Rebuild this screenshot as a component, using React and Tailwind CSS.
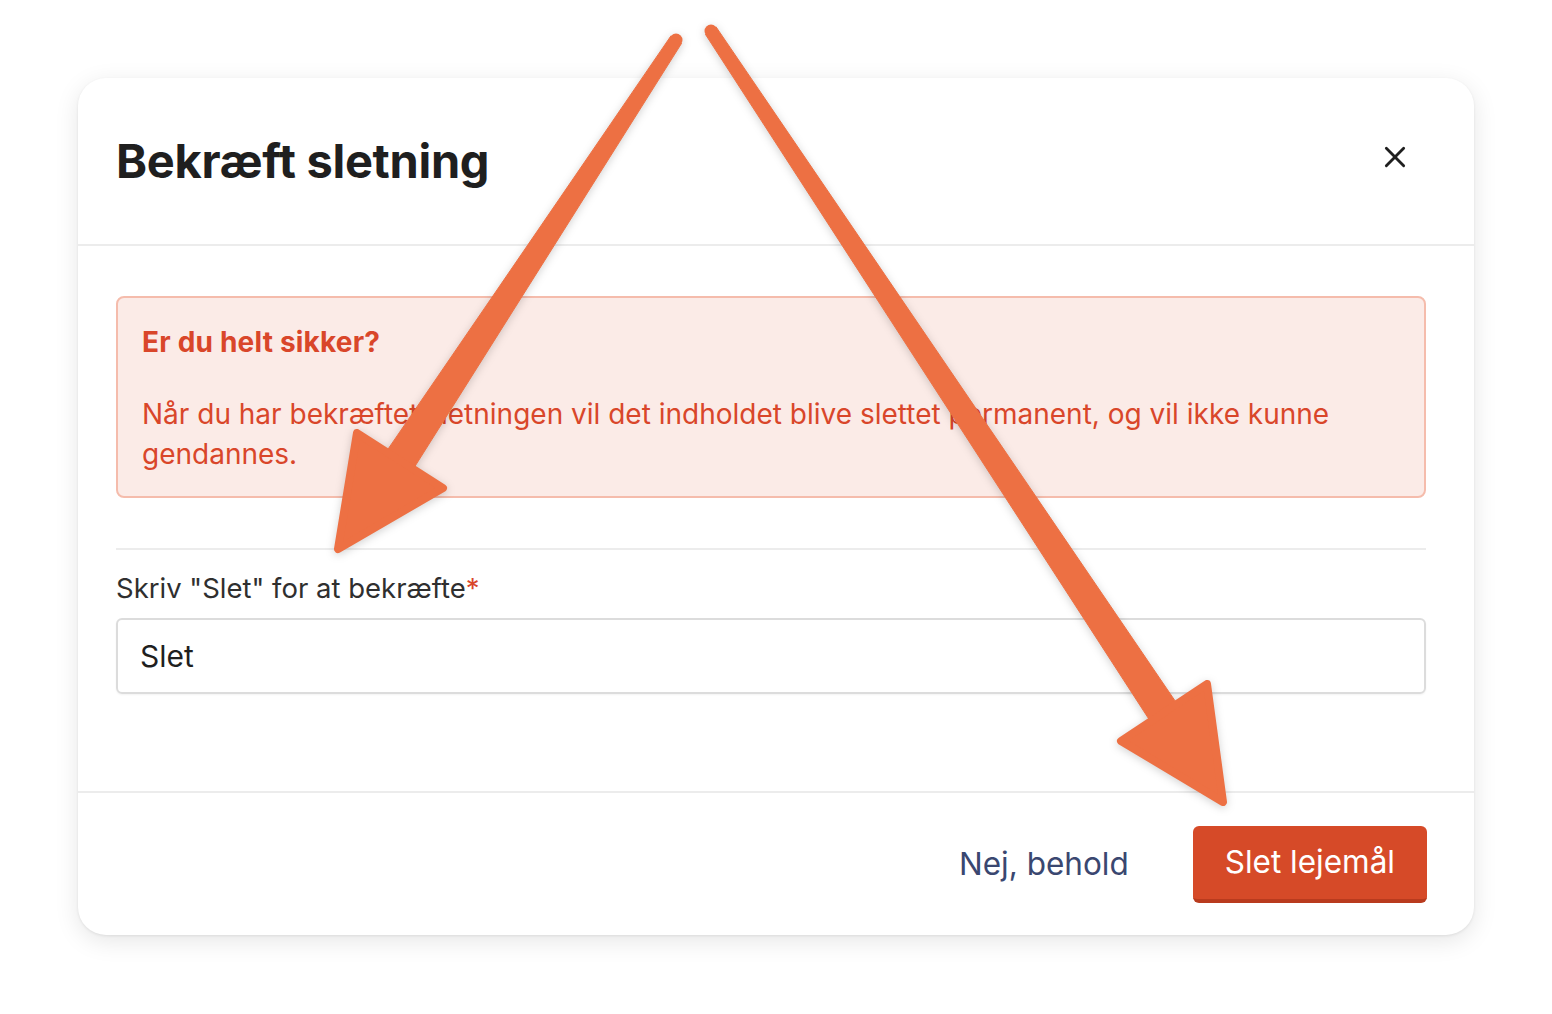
import React from "react";

function Arrows() {
  return (
    <svg
      className="absolute inset-0 pointer-events-none"
      width="1552"
      height="1014"
      viewBox="0 0 1552 1014"
      style={{ filter: "drop-shadow(0 2px 4px rgba(0,0,0,0.18))" }}
    >
      <g fill="#ed7043" stroke="#ed7043" strokeLinejoin="round" strokeLinecap="round">
        {/* left arrow */}
        <circle cx="676" cy="40" r="6.5" stroke="none" />
        <polygon points="681.4,43.6 413.4,468.8 386.6,451.2 670.6,36.4" strokeWidth="1" />
        <polygon points="357,433 443,488 338,549" strokeWidth="8" />
        {/* right arrow */}
        <circle cx="711" cy="31" r="6.5" stroke="none" />
        <polygon points="705.6,34.6 1148.7,718.8 1175.3,701.2 716.4,27.4" strokeWidth="1" />
        <polygon points="1207,684 1121,741 1223,802" strokeWidth="8" />
      </g>
    </svg>
  );
}

export default function App() {
  return (
    <div className="relative w-[1552px] h-[1014px] bg-white font-['Inter',sans-serif] overflow-hidden">
      <div className="pt-[78px] pl-[78px]">
        <div className="w-[1396px] bg-white rounded-[28px] shadow-[0_6px_24px_rgba(0,0,0,0.10),0_1px_3px_rgba(0,0,0,0.08)]">
          {/* header */}
          <div className="h-[168px] pl-[38px] pr-[48px] flex items-center justify-between border-b-2 border-[#ececec]">
            <h1 className="text-[47px] font-bold text-[#1f1f1f] tracking-[-0.3px]">Bekræft sletning</h1>
            <button className="mr-[18px] -mt-[8px] text-[#1f1f1f]">
              <svg width="26" height="26" viewBox="0 0 24 24" fill="none" stroke="currentColor" strokeWidth="2.6" strokeLinecap="round">
                <path d="M4 4l16 16M20 4L4 20" />
              </svg>
            </button>
          </div>

          {/* body */}
          <div className="pl-[38px] pr-[48px] pt-[50px] pb-[97px]">
            <div className="bg-[#fbebe7] border-2 border-[#f5bcac] rounded-[8px] px-[24px] pt-[24px] pb-[22px] text-[#d9462a]">
              <p className="text-[28px] leading-[40px] font-bold tracking-[0.2px]">Er du helt sikker?</p>
              <p className="mt-[32px] text-[28px] leading-[40px]">
                Når du har bekræftet sletningen vil det indholdet blive slettet permanent, og vil ikke kunne gendannes.
              </p>
            </div>
            <div className="mt-[50px] border-t-2 border-[#ececec]" />
            <label className="block mt-[20px] text-[27.5px] leading-[36px] text-[#2f2f2f]">
              Skriv "Slet" for at bekræfte<span className="text-[#d9462a]">*</span>
            </label>
            <div className="mt-[12px] h-[76px] border-2 border-[#dcdcdc] rounded-[6px] shadow-[0_1px_2px_rgba(0,0,0,0.05)] flex items-center px-[22px] text-[30px] text-[#1f1f1f]">
              Slet
            </div>
          </div>

          {/* footer */}
          <div className="border-t-2 border-[#ececec] h-[144px] px-[47px] flex items-center justify-end gap-[64px]">
            <button className="text-[31.5px] text-[#3a4770]">Nej, behold</button>
            <button className="h-[77px] px-[32px] bg-[#d64a28] border-b-[4px] border-[#b93b1e] rounded-[6px] text-white text-[31.5px]">
              Slet lejemål
            </button>
          </div>
        </div>
      </div>
      <Arrows />
    </div>
  );
}
